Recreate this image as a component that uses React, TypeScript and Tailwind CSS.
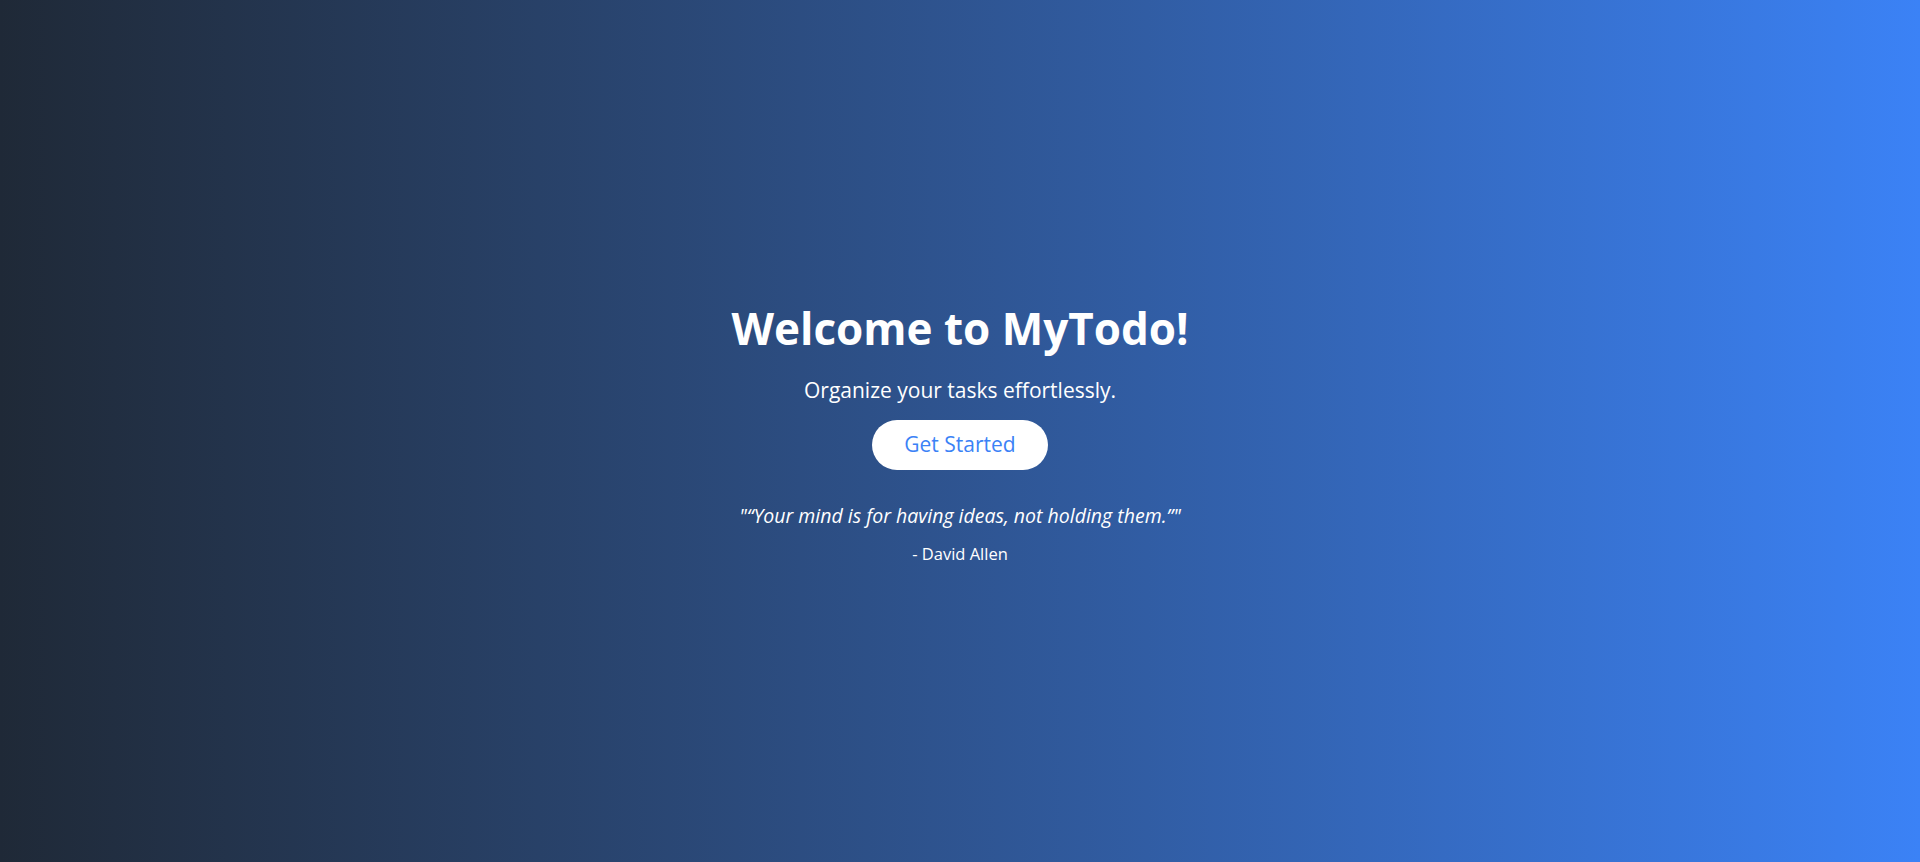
export default function App() {
  return (
    <div
      className="flex min-h-screen flex-col items-center justify-center bg-gradient-to-r from-[#1f2937] to-[#3b82f6] pt-[8px] text-center text-white"
      style={{ fontFamily: '"Open Sans", "Noto Sans", sans-serif' }}
    >
      <h1 className="mt-[2px] mb-[26px] text-[44px] leading-none font-bold">Welcome to MyTodo!</h1>
      <p className="mb-4 text-[21px] leading-7">Organize your tasks effortlessly.</p>
      <button className="h-[50px] rounded-full bg-white px-8 text-[21px] text-[#3b82f6]">
        Get Started
      </button>
      <blockquote className="mt-8 text-[19.5px] leading-7 italic">
        "“Your mind is for having ideas, not holding them.”"
      </blockquote>
      <p className="mt-3 text-[16.5px] leading-6">- David Allen</p>
    </div>
  );
}
